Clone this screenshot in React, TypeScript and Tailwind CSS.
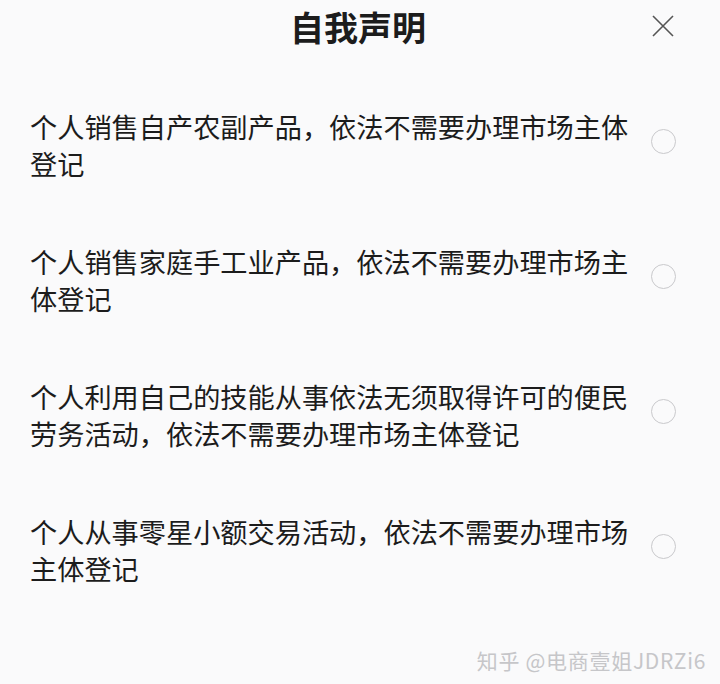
const items = [
  "个人销售自产农副产品，依法不需要办理市场主体登记",
  "个人销售家庭手工业产品，依法不需要办理市场主体登记",
  "个人利用自己的技能从事依法无须取得许可的便民劳务活动，依法不需要办理市场主体登记",
  "个人从事零星小额交易活动，依法不需要办理市场主体登记",
];

const font = { fontFamily: '"Noto Sans CJK SC", "Noto Sans", sans-serif' };

export default function App() {
  return (
    <div
      className="flex flex-col w-[720px] h-[684px] bg-[#fafafb] text-[#1c1c1c] overflow-hidden"
      style={font}
    >
      <div className="flex items-center h-[52px] pl-[20px] pr-[42px]">
        <div className="w-[48px]" />
        <h1 className="flex-1 text-center text-[34px] font-bold leading-none pt-[2px]">
          自我声明
        </h1>
        <button className="w-[30px] h-[30px] flex items-center justify-center">
          <svg width="22" height="22" viewBox="0 0 22 22" fill="none">
            <path d="M1 1L21 21M21 1L1 21" stroke="#555" strokeWidth="1.6" />
          </svg>
        </button>
      </div>

      <div className="flex flex-col gap-[61px] pt-[56px] pl-[30px] pr-[44px]">
        {items.map((t) => (
          <div key={t} className="flex items-center justify-between">
            <p className="w-[604px] text-[27.2px] leading-[37px]">{t}</p>
            <div className="w-[25px] h-[25px] rounded-full border border-[#c9c9cc] -mt-[8px]" />
          </div>
        ))}
      </div>

      <div className="mt-auto flex justify-end pr-[14px] pb-[13px]">
        <span className="text-[21px] leading-none text-[#c6c6c9] tracking-[0.7px]">
          知乎 @电商壹姐JDRZi6
        </span>
      </div>
    </div>
  );
}
